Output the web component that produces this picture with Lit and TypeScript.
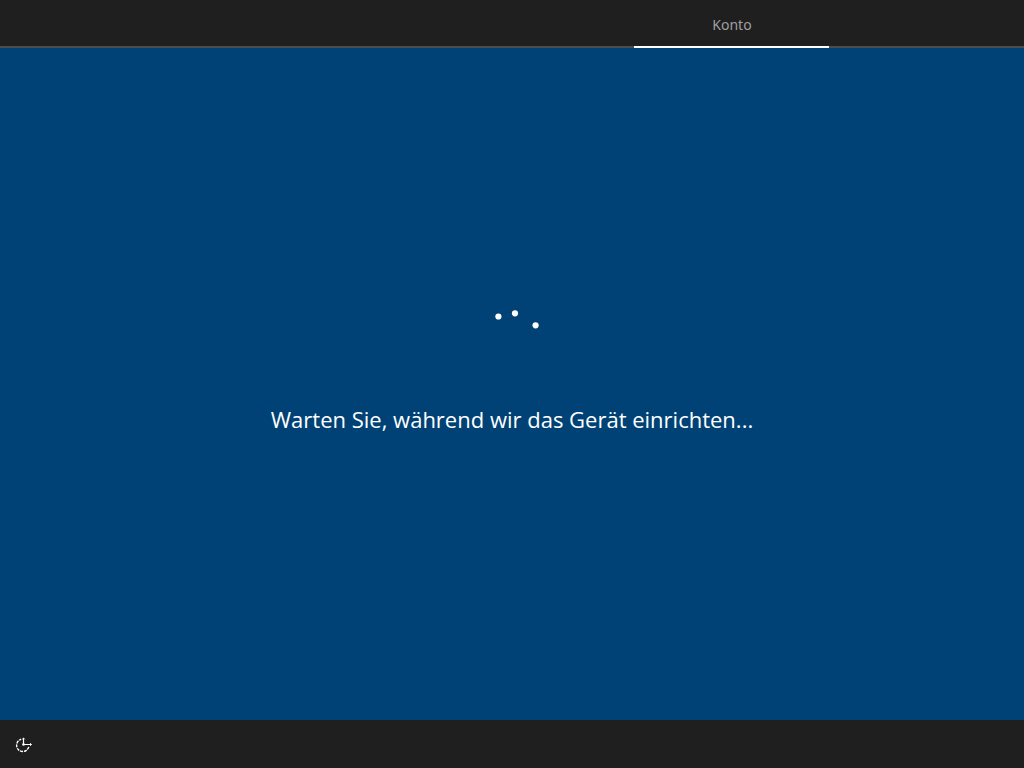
import { LitElement, html, css } from "lit";
import { customElement, property } from "lit/decorators.js";

@customElement("progress-ring")
class ProgressRing extends LitElement {
  static styles = css`
    :host {
      display: block;
      width: 64px;
      height: 64px;
    }
    .ring {
      display: block;
      fill: #fff;
    }
  `;

  render() {
    return html`
      <svg class="ring" width="64" height="64" viewBox="0 0 64 64" aria-hidden="true">
        <circle cx="18.4" cy="6.5" r="3.1" />
        <circle cx="35" cy="3.3" r="3.1" />
        <circle cx="55.6" cy="15.3" r="3.1" />
      </svg>
    `;
  }
}

@customElement("app-root")
class AppRoot extends LitElement {
  @property() section = "Konto";
  @property() message = "Warten Sie, während wir das Gerät einrichten...";

  static styles = css`
    :host {
      display: flex;
      flex-direction: column;
      min-height: 100vh;
      background: #004275;
      color: #fff;
      font-family: "Segoe UI", "Noto Sans", "Open Sans", sans-serif;
    }
    .header {
      display: flex;
      justify-content: flex-end;
      height: 48px;
      box-sizing: border-box;
      padding-right: 19%;
      background: linear-gradient(#4c4c4c, #4c4c4c) bottom / 100% 2px no-repeat #1f1f1f;
    }
    .tab {
      width: 195px;
      box-sizing: border-box;
      border-bottom: 2px solid #fff;
      padding-top: 2px;
      color: #9f9f9f;
      font-size: 14px;
      line-height: 46px;
      text-align: center;
    }
    .stage {
      flex: 1;
      display: flex;
      flex-direction: column;
      align-items: center;
      justify-content: center;
      gap: 29px;
      padding-bottom: 23px;
    }
    .message {
      margin: 0;
      font-family: "Segoe UI", "Open Sans", "Noto Sans", sans-serif;
      font-size: 22px;
      font-weight: 400;
      line-height: 32px;
    }
    .footer {
      display: flex;
      align-items: center;
      height: 48px;
      background: #1f1f1f;
    }
    .access {
      display: grid;
      place-items: center;
      width: 48px;
      height: 48px;
      padding: 0;
      border: 0;
      background: none;
      color: #fff;
    }
    .icon {
      fill: none;
      stroke: currentColor;
    }
  `;

  render() {
    return html`
      <header class="header">
        <div class="tab" aria-current="step">${this.section}</div>
      </header>
      <main class="stage">
        <progress-ring></progress-ring>
        <p class="message" role="status">${this.message}</p>
      </main>
      <footer class="footer">
        <button class="access" type="button" aria-label="Erleichterte Bedienung">
          <svg class="icon" width="20" height="20" viewBox="0 0 20 20" aria-hidden="true">
            <path
              d="M14.8 12.9A6.2 6.2 0 1 1 7.2 5.3"
              stroke-width="1.4"
              stroke-dasharray="3 0.9"
            />
            <path d="M9.5 4V10.5H17.5" stroke-width="1.2" />
            <path d="M16 9L17.5 10.5L16 12M8.2 5.3L9.5 4L10.8 5.3" stroke-width="0.8" />
            <circle cx="9.5" cy="10.5" r="1.3" fill="currentColor" stroke="none" />
          </svg>
        </button>
      </footer>
    `;
  }
}
